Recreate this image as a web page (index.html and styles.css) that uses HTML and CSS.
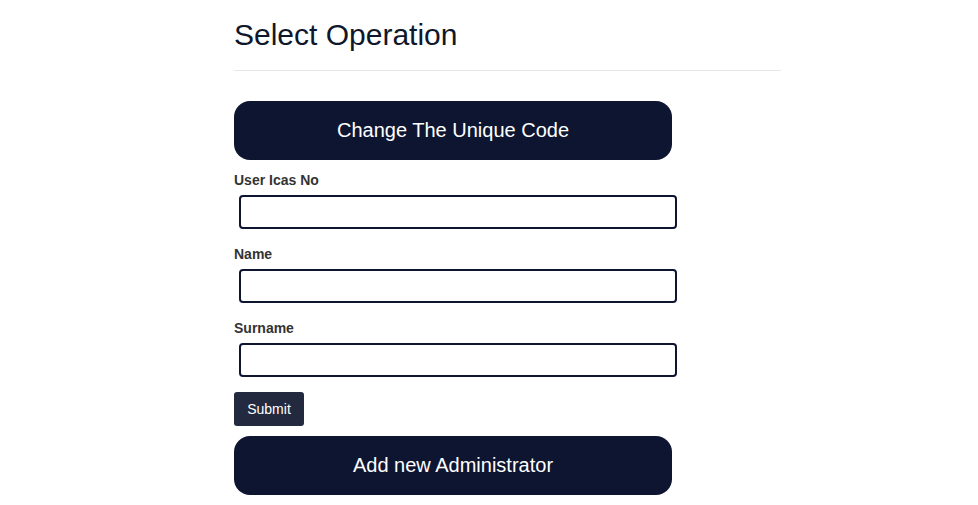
FILE: index.html
```html
<!DOCTYPE html>
<html>
<head>
<meta charset="utf-8">
<link rel="stylesheet" href="styles.css">
</head>
<body>
<div class="container">
  <h1 class="title">Select Operation</h1>
  <hr class="divider">
  <button class="big-btn first">Change The Unique Code</button>
  <form class="form">
    <label class="label">User Icas No</label>
    <input class="input" type="text">
    <label class="label">Name</label>
    <input class="input" type="text">
    <label class="label">Surname</label>
    <input class="input" type="text">
    <button type="button" class="submit">Submit</button>
  </form>
  <button class="big-btn">Add new Administrator</button>
</div>
</body>
</html>
```
FILE: styles.css
```css
* { box-sizing: border-box; }
body {
  margin: 0;
  font-family: "Liberation Sans", Arial, sans-serif;
  background: #fff;
}
.container {
  width: 547px;
  margin-left: 234px;
  padding-top: 17px;
  display: flex;
  flex-direction: column;
  align-items: flex-start;
}
.title {
  margin: 0;
  font-size: 30px;
  font-weight: 400;
  line-height: 36px;
  color: #0f172a;
}
.divider {
  width: 100%;
  margin: 17px 0 0 0;
  border: 0;
  border-top: 1px solid #e5e7eb;
}
.big-btn {
  width: 438px;
  height: 59px;
  border: 0;
  border-radius: 16px;
  background: #0e1530;
  color: #fff;
  font-family: inherit;
  font-size: 20px;
  margin: 0;
  padding: 0;
}
.big-btn.first { margin-top: 30px; }
.form {
  display: flex;
  flex-direction: column;
  align-items: flex-start;
  padding-top: 12px;
  width: 100%;
}
.label {
  font-size: 14px;
  font-weight: 700;
  line-height: 16px;
  color: #333;
}
.input {
  width: 438px;
  height: 34px;
  margin: 7px 0 17px 5px;
  border: 2px solid #0e1530;
  border-radius: 4px;
  background: #fff;
  font-family: inherit;
}
.form .input:last-of-type { margin-bottom: 15px; }
.submit {
  width: 70px;
  height: 34px;
  border: 0;
  border-radius: 3px;
  background: #232a40;
  color: #fff;
  font-family: inherit;
  font-size: 14px;
  padding: 0;
  margin-bottom: 10px;
}
```
